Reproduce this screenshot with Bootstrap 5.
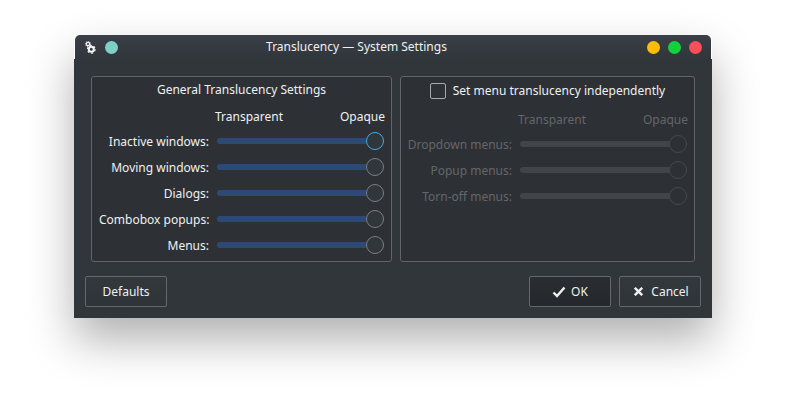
<!DOCTYPE html>
<html lang="en">
<head>
<meta charset="utf-8">
<title>Translucency — System Settings</title>
<link href="https://cdn.jsdelivr.net/npm/bootstrap@5.3.0/dist/css/bootstrap.min.css" rel="stylesheet">
<style>
body{background:#fff;font:12px/18px "Noto Sans",sans-serif;color:#eff0f1;height:402px;overflow:hidden}
.dialog-window{width:638px;height:283px;margin:35px 0 0 74px}
.shadow-box{box-shadow:0 22px 43px rgba(0,0,0,.31)}
.title-bar{height:24px;margin:0 1px;padding:0 9px 0 10px;border-radius:5px 5px 0 0;background:linear-gradient(#3a3f48,#31363b)}
.title-text{padding-right:52px}
.dot{width:13px;height:13px;border-radius:50%}
.dot-teal{background:#7ed0c7;margin-left:9px}.dot-yellow{background:#ffbd0a}.dot-green{background:#12d13c}.dot-red{background:#f74e57}
.dialog-body{height:259px;background:#31363b;padding:17px 11px 11px}
.panels{padding:0 6px;height:186px}
.panel{border:1px solid #616569;border-radius:3px;background:#2d3035}
.panel-general{width:301px;padding:4px 7px 0}
.panel-menus{width:295px;padding:5px 6px 0}
.panel-head{height:18px}
.scale{margin-top:9px;height:18px;padding-left:116px;margin-right:-1px}
.panel-menus .scale{margin-top:11px;padding-left:111px;margin-right:0}
.rows{margin-top:2px}
.slider-row{height:26px}
.slider-label{width:110px;padding-top:2px;text-align:right;white-space:nowrap}
.panel-menus .slider-label{width:105px}
.slider{width:167px;height:26px}
.track{height:6px;background:#2d4a77;border-radius:3px 0 0 3px}
.handle{width:18px;height:18px;border:1px solid #7b7f82;border-radius:50%;background:#31363b}
.handle-focus{border-color:#3daee9}
.panel-menus .track{background:#414549}
.panel-menus .handle{border-color:#46494d;background:#2d3035}
.dimmed{color:#63676a}
.check{appearance:none;width:16px;height:16px;border:1px solid #a7aaac;border-radius:2px;background:#2e3237;margin:0 7px 0 0}
.actions{margin-top:14px}
.dialog-btn{width:82px;height:31px;padding:1px 0 0;border:1px solid #64686b;border-radius:2px;color:#eff0f1;font-size:12px;line-height:18px;background:linear-gradient(#33383d,#2f3439)}
.dialog-btn-ok{background:linear-gradient(#2a2d31,#25282b)}
.dialog-btn svg{margin-top:-1px}
.icon-ok{margin-right:5px}
.btn-cancel{padding-left:3px}
</style>
</head>
<body>
<main class="dialog-window shadow-box">
 <header class="title-bar d-flex align-items-center">
  <svg width="11" height="13" viewBox="0 0 11 13" fill="none" stroke="#f4f5f5"><circle cx="3" cy="3" r="1.7" stroke-width="1.3"/><circle cx="3" cy="3" r="2.6" stroke-width=".8" stroke-dasharray="1 1.04"/><circle cx="6.3" cy="8.3" r="2.5" stroke-width="2"/><circle cx="6.3" cy="8.3" r="3.8" stroke-width="1.2" stroke-dasharray="2 1.98"/></svg>
  <span class="dot dot-teal"></span>
  <span class="title-text flex-grow-1 text-center">Translucency — System Settings</span>
  <span class="d-flex gap-2"><span class="dot dot-yellow"></span><span class="dot dot-green"></span><span class="dot dot-red"></span></span>
 </header>
 <div class="dialog-body">
  <div class="panels d-flex justify-content-between">
   <section class="panel panel-general">
    <div class="panel-head text-center">General Translucency Settings</div>
    <div class="scale d-flex justify-content-between"><span>Transparent</span><span>Opaque</span></div>
    <div class="rows">
     <div class="slider-row d-flex align-items-center gap-2"><span class="slider-label">Inactive windows:</span><span class="slider d-flex align-items-center"><span class="track flex-grow-1"></span><span class="handle handle-focus"></span></span></div>
     <div class="slider-row d-flex align-items-center gap-2"><span class="slider-label">Moving windows:</span><span class="slider d-flex align-items-center"><span class="track flex-grow-1"></span><span class="handle"></span></span></div>
     <div class="slider-row d-flex align-items-center gap-2"><span class="slider-label">Dialogs:</span><span class="slider d-flex align-items-center"><span class="track flex-grow-1"></span><span class="handle"></span></span></div>
     <div class="slider-row d-flex align-items-center gap-2"><span class="slider-label">Combobox popups:</span><span class="slider d-flex align-items-center"><span class="track flex-grow-1"></span><span class="handle"></span></span></div>
     <div class="slider-row d-flex align-items-center gap-2"><span class="slider-label">Menus:</span><span class="slider d-flex align-items-center"><span class="track flex-grow-1"></span><span class="handle"></span></span></div>
    </div>
   </section>
   <section class="panel panel-menus">
    <label class="panel-head d-flex align-items-center justify-content-center"><input class="check" type="checkbox"><span>Set menu translucency independently</span></label>
    <div class="scale dimmed d-flex justify-content-between"><span>Transparent</span><span>Opaque</span></div>
    <div class="rows dimmed">
     <div class="slider-row d-flex align-items-center gap-2"><span class="slider-label">Dropdown menus:</span><span class="slider d-flex align-items-center"><span class="track flex-grow-1"></span><span class="handle"></span></span></div>
     <div class="slider-row d-flex align-items-center gap-2"><span class="slider-label">Popup menus:</span><span class="slider d-flex align-items-center"><span class="track flex-grow-1"></span><span class="handle"></span></span></div>
     <div class="slider-row d-flex align-items-center gap-2"><span class="slider-label">Torn-off menus:</span><span class="slider d-flex align-items-center"><span class="track flex-grow-1"></span><span class="handle"></span></span></div>
    </div>
   </section>
  </div>
  <footer class="actions d-flex gap-2">
   <button class="btn dialog-btn me-auto" type="button">Defaults</button>
   <button class="btn dialog-btn dialog-btn-ok d-flex align-items-center justify-content-center" type="button"><svg class="icon-ok" width="14" height="12" viewBox="0 0 14 12"><path d="M1.5 6.5 5 10 12.5 1.5" fill="none" stroke="#eff0f1" stroke-width="2.4"/></svg>OK</button>
   <button class="btn dialog-btn btn-cancel d-flex align-items-center justify-content-center" type="button"><svg class="me-2" width="9" height="9" viewBox="0 0 9 9"><path d="M.8.8 8.2 8.2M8.2.8.8 8.2" stroke="#eff0f1" stroke-width="2.4"/></svg>Cancel</button>
  </footer>
 </div>
</main>
<script src="https://cdn.jsdelivr.net/npm/bootstrap@5.3.0/dist/js/bootstrap.bundle.min.js"></script>
</body>
</html>
